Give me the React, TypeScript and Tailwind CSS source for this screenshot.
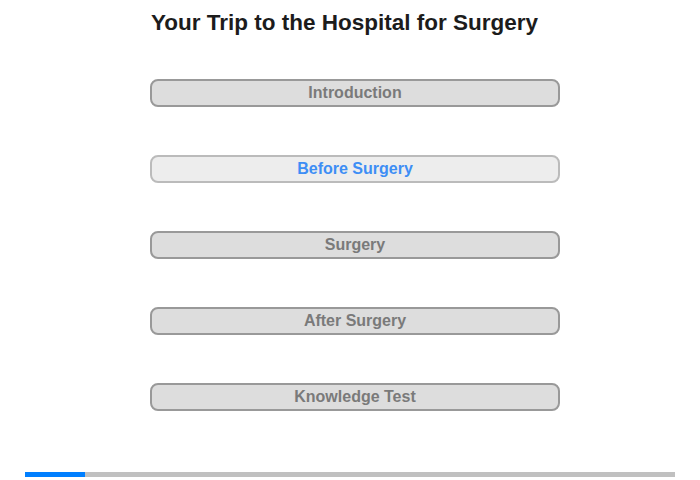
const sections = [
  { label: "Introduction", active: false },
  { label: "Before Surgery", active: true },
  { label: "Surgery", active: false },
  { label: "After Surgery", active: false },
  { label: "Knowledge Test", active: false },
];

export default function App() {
  return (
    <div className="flex h-[480px] w-[700px] flex-col bg-white font-['Liberation_Sans',Arial,sans-serif]">
      <div className="ml-[150px] w-[410px] pt-[10px]">
        <h1 className="pl-px text-[22.5px] font-bold leading-[26px] text-[#1c1c1c]">
          Your Trip to the Hospital for Surgery
        </h1>

        <div className="mt-[43px] flex flex-col gap-[48px]">
          {sections.map((s) =>
            s.active ? (
              <button
                key={s.label}
                className="flex h-[28px] w-full items-center justify-center rounded-[8px] border-2 border-[#bbbbbb] bg-[#ededed] text-[16px] font-bold text-[#3d8ef5]"
              >
                {s.label}
              </button>
            ) : (
              <button
                key={s.label}
                className="flex h-[28px] w-full items-center justify-center rounded-[8px] border-2 border-[#999999] bg-[#dddddd] text-[16px] font-bold text-[#7a7a7a]"
              >
                {s.label}
              </button>
            )
          )}
        </div>
      </div>

      <div className="mx-[25px] mt-auto mb-[3px] flex h-[5px] bg-[#c0c0c0]">
        <div className="h-full w-[60px] bg-[#007fff]" />
      </div>
    </div>
  );
}
